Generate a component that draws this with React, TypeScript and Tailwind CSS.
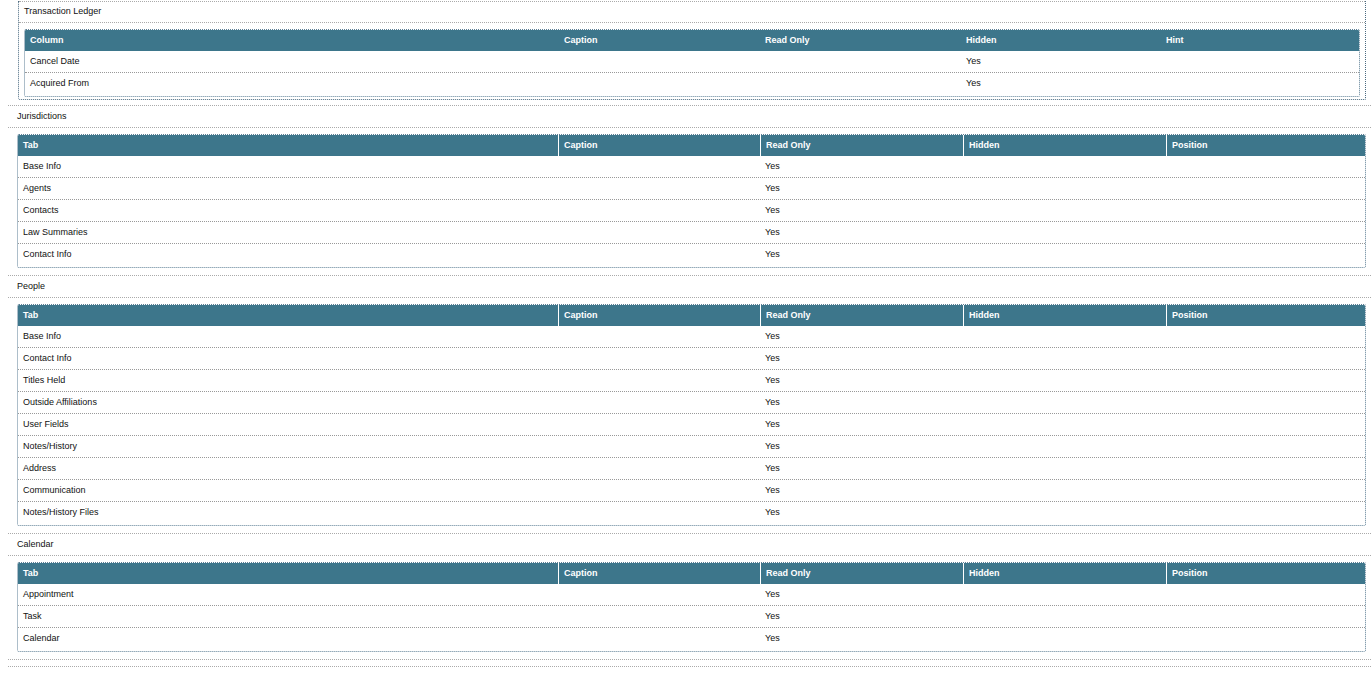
const F = { fontFamily: '"Liberation Sans", Arial, sans-serif' };

function Table({ cols, widths, rows, sep }: { cols: string[]; widths: number[]; rows: string[][]; sep: boolean }) {
  return (
    <div className="border border-dotted border-[#5d7f95] rounded-[2px] overflow-hidden">
      <div className="flex h-[21px] bg-[#3d768b] text-white font-bold text-[9px]">
        {cols.map((c, i) => (
          <div
            key={i}
            style={{ width: widths[i] }}
            className={`flex items-center px-[5px] shrink-0 ${sep && i > 0 ? "border-l border-white" : ""} ${i === cols.length - 1 ? "grow" : ""}`}
          >
            {c}
          </div>
        ))}
      </div>
      {rows.map((r, ri) => (
        <div key={ri} className={`flex h-[22px] text-[9px] text-[#111] ${ri < rows.length - 1 ? "border-b border-dotted border-[#999]" : ""}`}>
          {r.map((c, i) => (
            <div key={i} style={{ width: widths[i] }} className={`flex items-center px-[5px] shrink-0 ${i === r.length - 1 ? "grow" : ""}`}>
              {c}
            </div>
          ))}
        </div>
      ))}
      <div className="h-[1px]" />
    </div>
  );
}

const W = [540, 202, 203, 203, 200];

function Section({ title, rows }: { title: string; rows: string[] }) {
  return (
    <div className="border-t border-dotted border-[#aaa] ml-[8px]">
      <div className="h-[22px] flex items-center pl-[9px] border-b border-dotted border-[#aaa] text-[9px] text-[#111]">{title}</div>
      <div className="pl-[9px] pr-[5px] pt-[6px] pb-[7px]">
        <Table
          cols={["Tab", "Caption", "Read Only", "Hidden", "Position"]}
          widths={W}
          sep
          rows={rows.map((r) => [r, "", "Yes", "", ""])}
        />
      </div>
    </div>
  );
}

export default function App() {
  return (
    <div style={F} className="w-[1371px] h-[681px] bg-white overflow-hidden">
      <div className="ml-[18px] mr-[5px] border border-t-0 border-dotted border-[#4a6a80] rounded-b-[2px] pb-[2px] mt-[1px]">
        <div className="border-t border-dotted border-[#aaa] h-[22px] flex items-center pl-[5px] border-b text-[9px] text-[#111]">Transaction Ledger</div>
        <div className="px-[5px] pt-[6px]">
          <Table
            cols={["Column", "Caption", "Read Only", "Hidden", "Hint"]}
            widths={[534, 201, 201, 200, 200]}
            sep={false}
            rows={[
              ["Cancel Date", "", "", "Yes", ""],
              ["Acquired From", "", "", "Yes", ""],
            ]}
          />
        </div>
      </div>
      <div className="h-[5px]" />
      <Section title="Jurisdictions" rows={["Base Info", "Agents", "Contacts", "Law Summaries", "Contact Info"]} />
      <Section
        title="People"
        rows={["Base Info", "Contact Info", "Titles Held", "Outside Affiliations", "User Fields", "Notes/History", "Address", "Communication", "Notes/History Files"]}
      />
      <Section title="Calendar" rows={["Appointment", "Task", "Calendar"]} />
      <div className="border-t border-dotted border-[#aaa] ml-[8px] h-[7px]" />
      <div className="border-t border-dotted border-[#aaa] ml-[8px]" />
    </div>
  );
}
